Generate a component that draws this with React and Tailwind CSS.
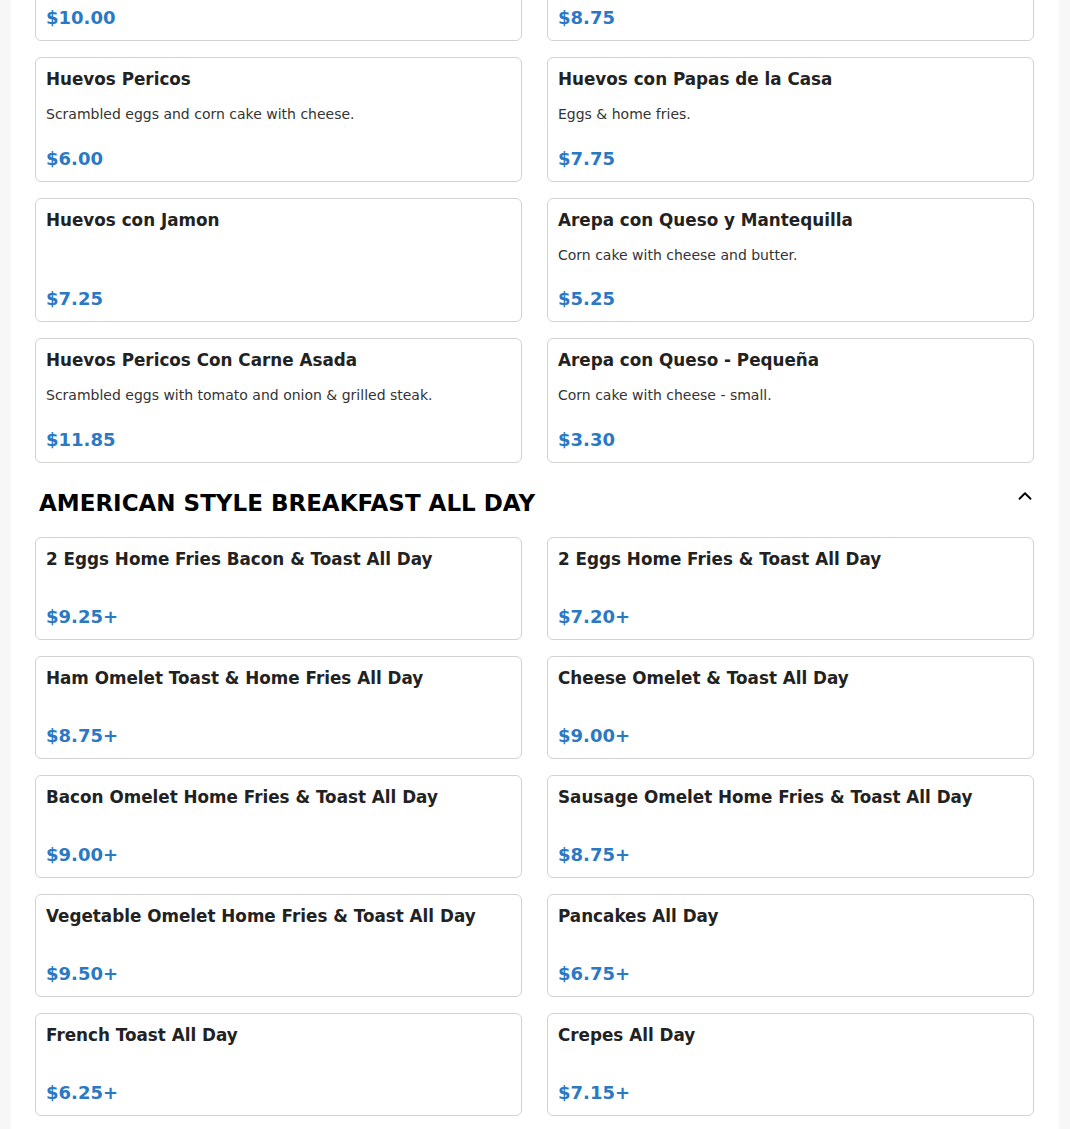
import React from 'react';
import { ChevronUp } from 'lucide-react';

const latin = [
  { name: 'Huevos Rancheros', desc: 'Fried eggs with ranchero sauce.', price: '$10.00' },
  { name: 'Calentado Paisa', desc: 'Rice and beans with fried egg.', price: '$8.75' },
  { name: 'Huevos Pericos', desc: 'Scrambled eggs and corn cake with cheese.', price: '$6.00' },
  { name: 'Huevos con Papas de la Casa', desc: 'Eggs & home fries.', price: '$7.75' },
  { name: 'Huevos con Jamon', price: '$7.25' },
  { name: 'Arepa con Queso y Mantequilla', desc: 'Corn cake with cheese and butter.', price: '$5.25' },
  { name: 'Huevos Pericos Con Carne Asada', desc: 'Scrambled eggs with tomato and onion & grilled steak.', price: '$11.85' },
  { name: 'Arepa con Queso - Pequeña', desc: 'Corn cake with cheese - small.', price: '$3.30' },
];

const american = [
  { name: '2 Eggs Home Fries Bacon & Toast All Day', price: '$9.25+' },
  { name: '2 Eggs Home Fries & Toast All Day', price: '$7.20+' },
  { name: 'Ham Omelet Toast & Home Fries All Day', price: '$8.75+' },
  { name: 'Cheese Omelet & Toast All Day', price: '$9.00+' },
  { name: 'Bacon Omelet Home Fries & Toast All Day', price: '$9.00+' },
  { name: 'Sausage Omelet Home Fries & Toast All Day', price: '$8.75+' },
  { name: 'Vegetable Omelet Home Fries & Toast All Day', price: '$9.50+' },
  { name: 'Pancakes All Day', price: '$6.75+' },
  { name: 'French Toast All Day', price: '$6.25+' },
  { name: 'Crepes All Day', price: '$7.15+' },
];

const ItemCard = ({ item }) => (
  <div className="bg-white border border-[#d2d2d2] rounded-[6px] p-[10px] min-h-[103px] flex flex-col">
    <h3 className="text-[16.8px] leading-[22px] font-bold text-[#222]">{item.name}</h3>
    {item.desc && (
      <p className="mt-[14px] mb-[22.5px] text-[14px] leading-[20px] text-[#333]">{item.desc}</p>
    )}
    <div className="mt-auto text-[18px] leading-[24px] font-bold text-[#2a79c4]">{item.price}</div>
  </div>
);

export default function App() {
  return (
    <div className="bg-[#f7f7f7] min-h-screen overflow-hidden" style={{ fontFamily: '"DejaVu Sans", Verdana, sans-serif' }}>
      <div className="mx-[11px] bg-white pl-[24px] pr-[25px] pb-[20px]">
        <div className="-mt-[83.5px] grid grid-cols-2 gap-x-[25px] gap-y-[16px]">
          {latin.map((item, i) => (
            <ItemCard key={i} item={item} />
          ))}
        </div>

        {/* Section: American style */}
        <div className="flex items-center justify-between pl-[4px] mt-[24.5px] mb-[18px] h-[32px]">
          <h2 className="text-[23px] font-bold text-black leading-[32px]">AMERICAN STYLE BREAKFAST ALL DAY</h2>
          <ChevronUp size={22} strokeWidth={2} className="text-black -mt-[14px] -mr-[2px]" />
        </div>
        <div className="grid grid-cols-2 gap-x-[25px] gap-y-[16px]">
          {american.map((item, i) => (
            <ItemCard key={i} item={item} />
          ))}
        </div>
      </div>
    </div>
  );
}
